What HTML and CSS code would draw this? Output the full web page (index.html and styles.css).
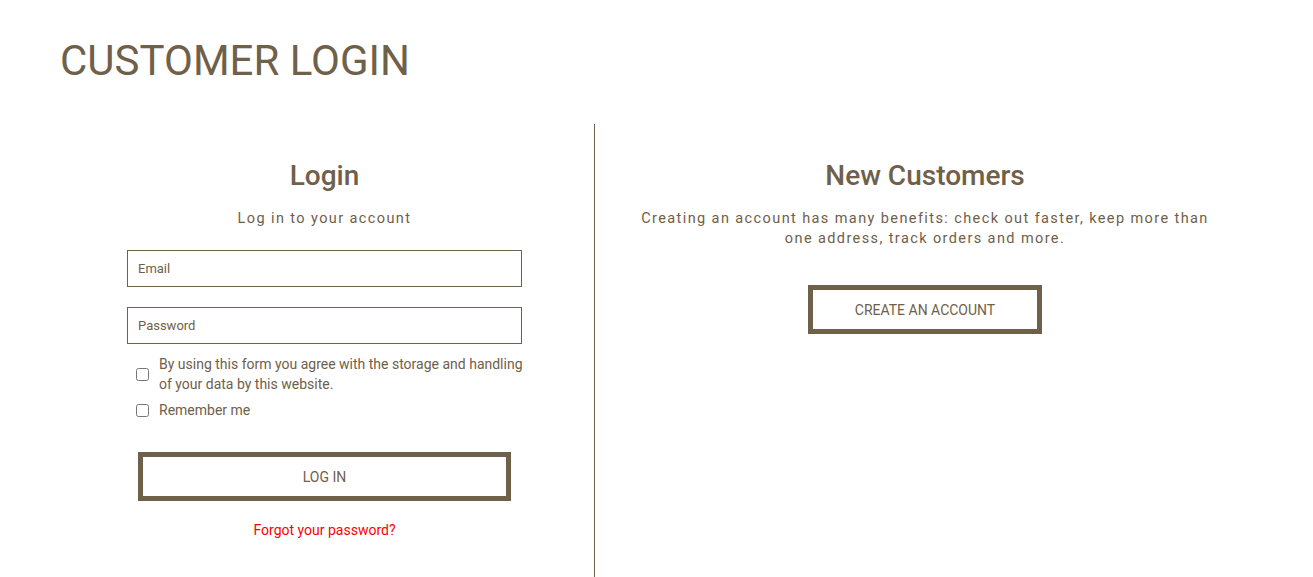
FILE: index.html
```html
<!DOCTYPE html>
<html lang="en">
<head>
<meta charset="utf-8">
<title>Customer Login</title>
<link rel="stylesheet" href="styles.css">
</head>
<body>
<main class="page">
  <h1 class="page-title">CUSTOMER LOGIN</h1>
  <div class="columns">
    <section class="col col-login">
      <h2 class="col-title">Login</h2>
      <p class="col-sub">Log in to your account</p>
      <form class="login-form">
        <input class="field" type="text" placeholder="Email">
        <input class="field" type="password" placeholder="Password">
        <label class="check check-agree"><input type="checkbox"><span>By using this form you agree with the storage and handling of your data by this website.</span></label>
        <label class="check"><input type="checkbox"><span>Remember me</span></label>
        <button type="button" class="btn btn-login">LOG IN</button>
        <a class="forgot" href="#">Forgot your password?</a>
      </form>
    </section>
    <section class="col col-new">
      <h2 class="col-title">New Customers</h2>
      <p class="col-sub col-sub-wide">Creating an account has many benefits: check out faster, keep more than one address, track orders and more.</p>
      <button type="button" class="btn btn-create">CREATE AN ACCOUNT</button>
    </section>
  </div>
</main>
</body>
</html>
```
FILE: styles.css
```css
* { box-sizing: border-box; }
html, body { margin: 0; padding: 0; background: #fff; }
body { font-family: Roboto, "Open Sans", Arial, sans-serif; color: #6f604a; }
.page { padding: 0 0 0 55px; }
.page-title {
  margin: 0;
  padding: 36px 0 0 5px;
  font-size: 42px;
  font-weight: 400;
  line-height: 50px;
  color: #6f604a;
}
.columns {
  display: grid;
  grid-template-columns: 540px 660px;
  margin-top: 38px;
}
.col { display: flex; flex-direction: column; align-items: center; }
.col-login { border-right: 1px solid #6f604a; min-height: 453px; }
.col-title {
  margin: 36px 0 0;
  font-size: 28px;
  font-weight: 500;
  line-height: 32px;
  color: #6f604a;
}
.col-sub {
  margin: 17px 0 0;
  font-size: 14.5px;
  line-height: 20px;
  letter-spacing: 1.4px;
  text-align: center;
  color: #6f604a;
}
.col-sub-wide { width: 590px; }
.login-form { width: 395px; display: flex; flex-direction: column; align-items: stretch; margin-top: 21px; }
.field {
  height: 37px;
  border: 1px solid #6f604a;
  padding: 0 10px;
  font-family: Roboto, Arial, sans-serif;
  font-size: 13px;
  color: #6f604a;
  margin-bottom: 20px;
  outline: none;
  border-radius: 0;
}
.field::placeholder { color: #6f604a; opacity: 1; }
.field + .field { margin-bottom: 10px; }
.check {
  display: flex;
  align-items: center;
  gap: 10px;
  padding-left: 9px;
  margin-right: -8px;
  font-size: 14px;
  line-height: 20px;
  color: #6f604a;
  margin-bottom: 6px;
}
.check input { margin: 0; width: 13px; height: 13px; flex: none; }
.btn {
  background: #fff;
  border: 5px solid #6f604a;
  font-family: Roboto, Arial, sans-serif;
  font-size: 14px;
  color: #6f604a;
  height: 49px;
  border-radius: 0;
  cursor: pointer;
}
.btn-login { width: 373px; align-self: center; margin-top: 26px; }
.forgot {
  align-self: center;
  margin-top: 21px;
  color: #ff0000;
  font-size: 14px;
  text-decoration: none;
}
.btn-create { width: 234px; margin-top: 36px; }
```
